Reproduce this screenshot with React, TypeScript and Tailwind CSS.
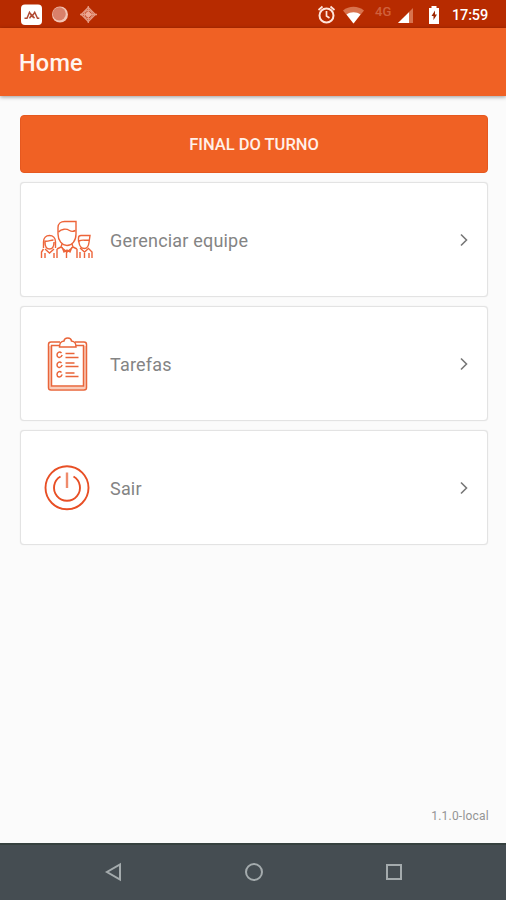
import type { ReactNode } from "react";

function StatusBar() {
  return (
    <div className="flex h-7 shrink-0 items-center bg-[#b72b00] pl-5 pr-[18px] text-white">
      <svg className="h-7 w-[80px]" viewBox="0 0 80 28" fill="none">
        <rect x="1" y="4.5" width="21" height="20.5" rx="4" fill="#fff" />
        <path d="M4.500 18.300H7l2.500-6 2.600 4 2.600-4 2.800 6h1.800M9.500 18.300l2.200-3.500 2.800 3.500" stroke="#b04a33" strokeWidth="1.500" />
        <circle cx="40" cy="14.500" r="8" fill="#f3c4b4" />
        <circle cx="39.200" cy="13.800" r="6.600" fill="#d9806a" />
        <g stroke="#e59a83" strokeWidth="1.300">
          <path d="M68.300 7.500l7 7-7 7-7-7z" />
          <circle cx="68.300" cy="14.500" r="4" />
          <path d="M68.300 6v17M60 14.500h17" />
        </g>
        <circle cx="68.300" cy="14.500" r="2.800" fill="#f0aa95" />
      </svg>
      <svg className="ml-auto h-7 w-[57px]" viewBox="317 0 57 28" fill="none">
        <circle cx="326.500" cy="15.500" r="7" stroke="#ffe5dc" strokeWidth="2" />
        <path d="M326.500 11v5l3 2M318.500 10l4-3.500M334.500 10l-4-3.500" stroke="#ffe5dc" strokeWidth="1.700" />
        <path d="M343 10.500C349 5.500 358 5.500 364 10.500L353.500 23.500Z" fill="#d8734e" />
        <path d="M346.500 14.500C350.500 11.500 356.500 11.500 360.500 14.500L353.500 23.500Z" fill="#fff" />
      </svg>
      <span className="mb-[6px] w-6 pl-px text-[13px] font-medium leading-none text-[#d0603c]">4G</span>
      <svg className="h-7 w-[50px]" viewBox="398 0 50 28" fill="none">
        <path d="M398 23L413 8V23Z" fill="#d8734e" />
        <path d="M398 23L409 12.200V23Z" fill="#fff" />
        <path d="M429 8h2.500V6h5v2h2.500v16h-10z" fill="#fff" />
        <path d="M435 10.500l-3.500 5.500h2v4l3.500-5.500h-2z" fill="#9c2500" />
      </svg>
      <span className="ml-1 w-9 whitespace-nowrap pt-[4px] text-[14.500px] font-medium leading-none tracking-[-0.150px]">17:59</span>
    </div>
  );
}

function TeamIcon() {
  return (
    <svg className="h-[42px] w-[54px]" viewBox="40 218 54 42" fill="none" stroke="#ed6439" strokeWidth="1.400">
      <path d="M58 231v-4.500c0-4 3-6 6.500-6H76v12.500c0 7-4 11.500-9 11.500s-9-5-9-11.500z" />
      <path d="M58.500 231c3-3.500 8-3.500 11-1.500 2 1.300 4 1 6 0M62 243l-1 3 6 5 6-5-1-3M61 246l-4 2M73 246l4 2M62 246l2 5 3-2 3 2 2-5M66.500 250v7M57 248v9M77 248v9" />
      <path d="M43.500 247v-6c0-4 2.500-6.500 6-6.500s6 2.500 6 6.500v6M44.500 240c3 1 6-1 9-1M45 241c0 5 2 7 4.500 7s4.500-2 4.500-7M45 248l4.500 4 4.500-4M43.500 248l-2 3v6M45 252v5M54 252v5" />
      <path d="M78.500 240v-3c0-1.500 1-2.500 2.500-2.500h9l-1 7c-.5 4-2 6-4.500 6s-5-2-5.500-6zM79 240c4-2 6 0 10-1M80 247l4.500 4 4.500-4M89 248l3 3v6M80 251v6M84.500 252v5M89 252v5" />
    </svg>
  );
}

function TasksIcon() {
  return (
    <svg className="h-[56px] w-[42px]" viewBox="46 336 42 56" fill="none" stroke="#e9653a" strokeWidth="1.500">
      <path d="M50 387.800h35M85 346v42M50 346v42" stroke="#f9cdbb" strokeWidth="2.500" />
      <path d="M60 342H51c-1.500 0-2.500 1-2.500 2.500v43c0 1.500 1 2.500 2.500 2.500h33c1.500 0 2.500-1 2.500-2.500v-43c0-1.500-1-2.500-2.500-2.500h-9" />
      <path d="M59 345.500h-7.500V386h32v-40.500H76" />
      <path d="M59.500 347c0-4 1-5.500 4.500-6 .5-4 7-4 7.500 0 3.500.5 4.500 2 4.500 6z" fill="#fff" />
      <path d="M61.500 353c-2-2-4.500-.5-4.500 2s3.500 4 5.200 0M61.500 363c-2-2-4.500-.5-4.500 2s3.500 4 5.200 0M61.500 372.500c-2-2-4.500-.5-4.500 2s3.500 4 5.200 0" />
      <path d="M65.500 353.500h9M65.500 357.500h13M65.500 363h9M65.500 366.500h13M65.500 373h9M65.500 376.500h13" />
    </svg>
  );
}

function PowerIcon() {
  return (
    <svg className="size-[48px]" viewBox="43 464 48 48" fill="none" stroke="#e84f25" strokeWidth="1.900">
      <circle cx="67" cy="487.800" r="21.500" />
      <path d="M60.500 476.500a13 13 0 1 0 13 0" />
      <path d="M67 472.500v15.500" stroke="#ef8b6c" strokeWidth="2.400" />
    </svg>
  );
}

function MenuCard({ icon, label }: { icon: ReactNode; label: string }) {
  return (
    <button className="flex h-[115px] w-full shrink-0 items-center rounded-[4px] border border-[#e3e3e3] bg-white pr-[18px] shadow-[0_0_1px_#ddd]">
      <span className="ml-[19px] flex w-[54px] justify-center">{icon}</span>
      <span className="ml-4 pt-[2px] text-[18px] leading-6 tracking-[0.190px] text-[#848484]">{label}</span>
      <svg className="ml-auto h-[14px] w-[10px]" viewBox="0 0 10 14" fill="none" stroke="#777" strokeWidth="1.600">
        <path d="M2 1.500L7.500 7 2 12.500" />
      </svg>
    </button>
  );
}

export default function App() {
  return (
    <div className="flex h-[900px] w-[506px] flex-col overflow-hidden bg-[#fbfbfb] font-['Roboto',sans-serif]">
      <StatusBar />
      <header className="flex h-[68px] shrink-0 items-center bg-[#f06124] pl-[19px] pt-[4px] text-[23.500px] font-medium tracking-[0.200px] text-[#fff4ef] shadow-[0_1px_4px_rgba(0,0,0,0.4)]">
        Home
      </header>
      <main className="flex flex-1 flex-col gap-[9px] pl-5 pr-[18px] pt-[19px]">
        <button className="h-[58px] shrink-0 rounded-[4px] border border-[#e6581f] bg-[#f06124] pt-[2px] text-[16.500px] font-medium text-[#fff0e9]">
          FINAL DO TURNO
        </button>
        <MenuCard icon={<TeamIcon />} label="Gerenciar equipe" />
        <MenuCard icon={<TasksIcon />} label="Tarefas" />
        <MenuCard icon={<PowerIcon />} label="Sair" />
        <p className="mb-[19px] mr-[-1px] mt-auto text-right text-[12px] leading-4 tracking-[0.220px] text-[#949494]">1.1.0-local</p>
      </main>
      <nav className="flex h-[57px] shrink-0 items-center justify-between border-t-2 border-[#36413f] bg-[#454d52] pb-px pl-[103px] pr-[102px]">
        {["M17 2.500V17.500L4 10Z", "M10 2a8 8 0 1 0 0 16a8 8 0 1 0 0-16", "M3 3H17V17H3Z"].map((d) => (
          <svg key={d} className="size-5" viewBox="0 0 20 20" fill="none" stroke="#a4abad" strokeWidth="2">
            <path d={d} />
          </svg>
        ))}
      </nav>
    </div>
  );
}
